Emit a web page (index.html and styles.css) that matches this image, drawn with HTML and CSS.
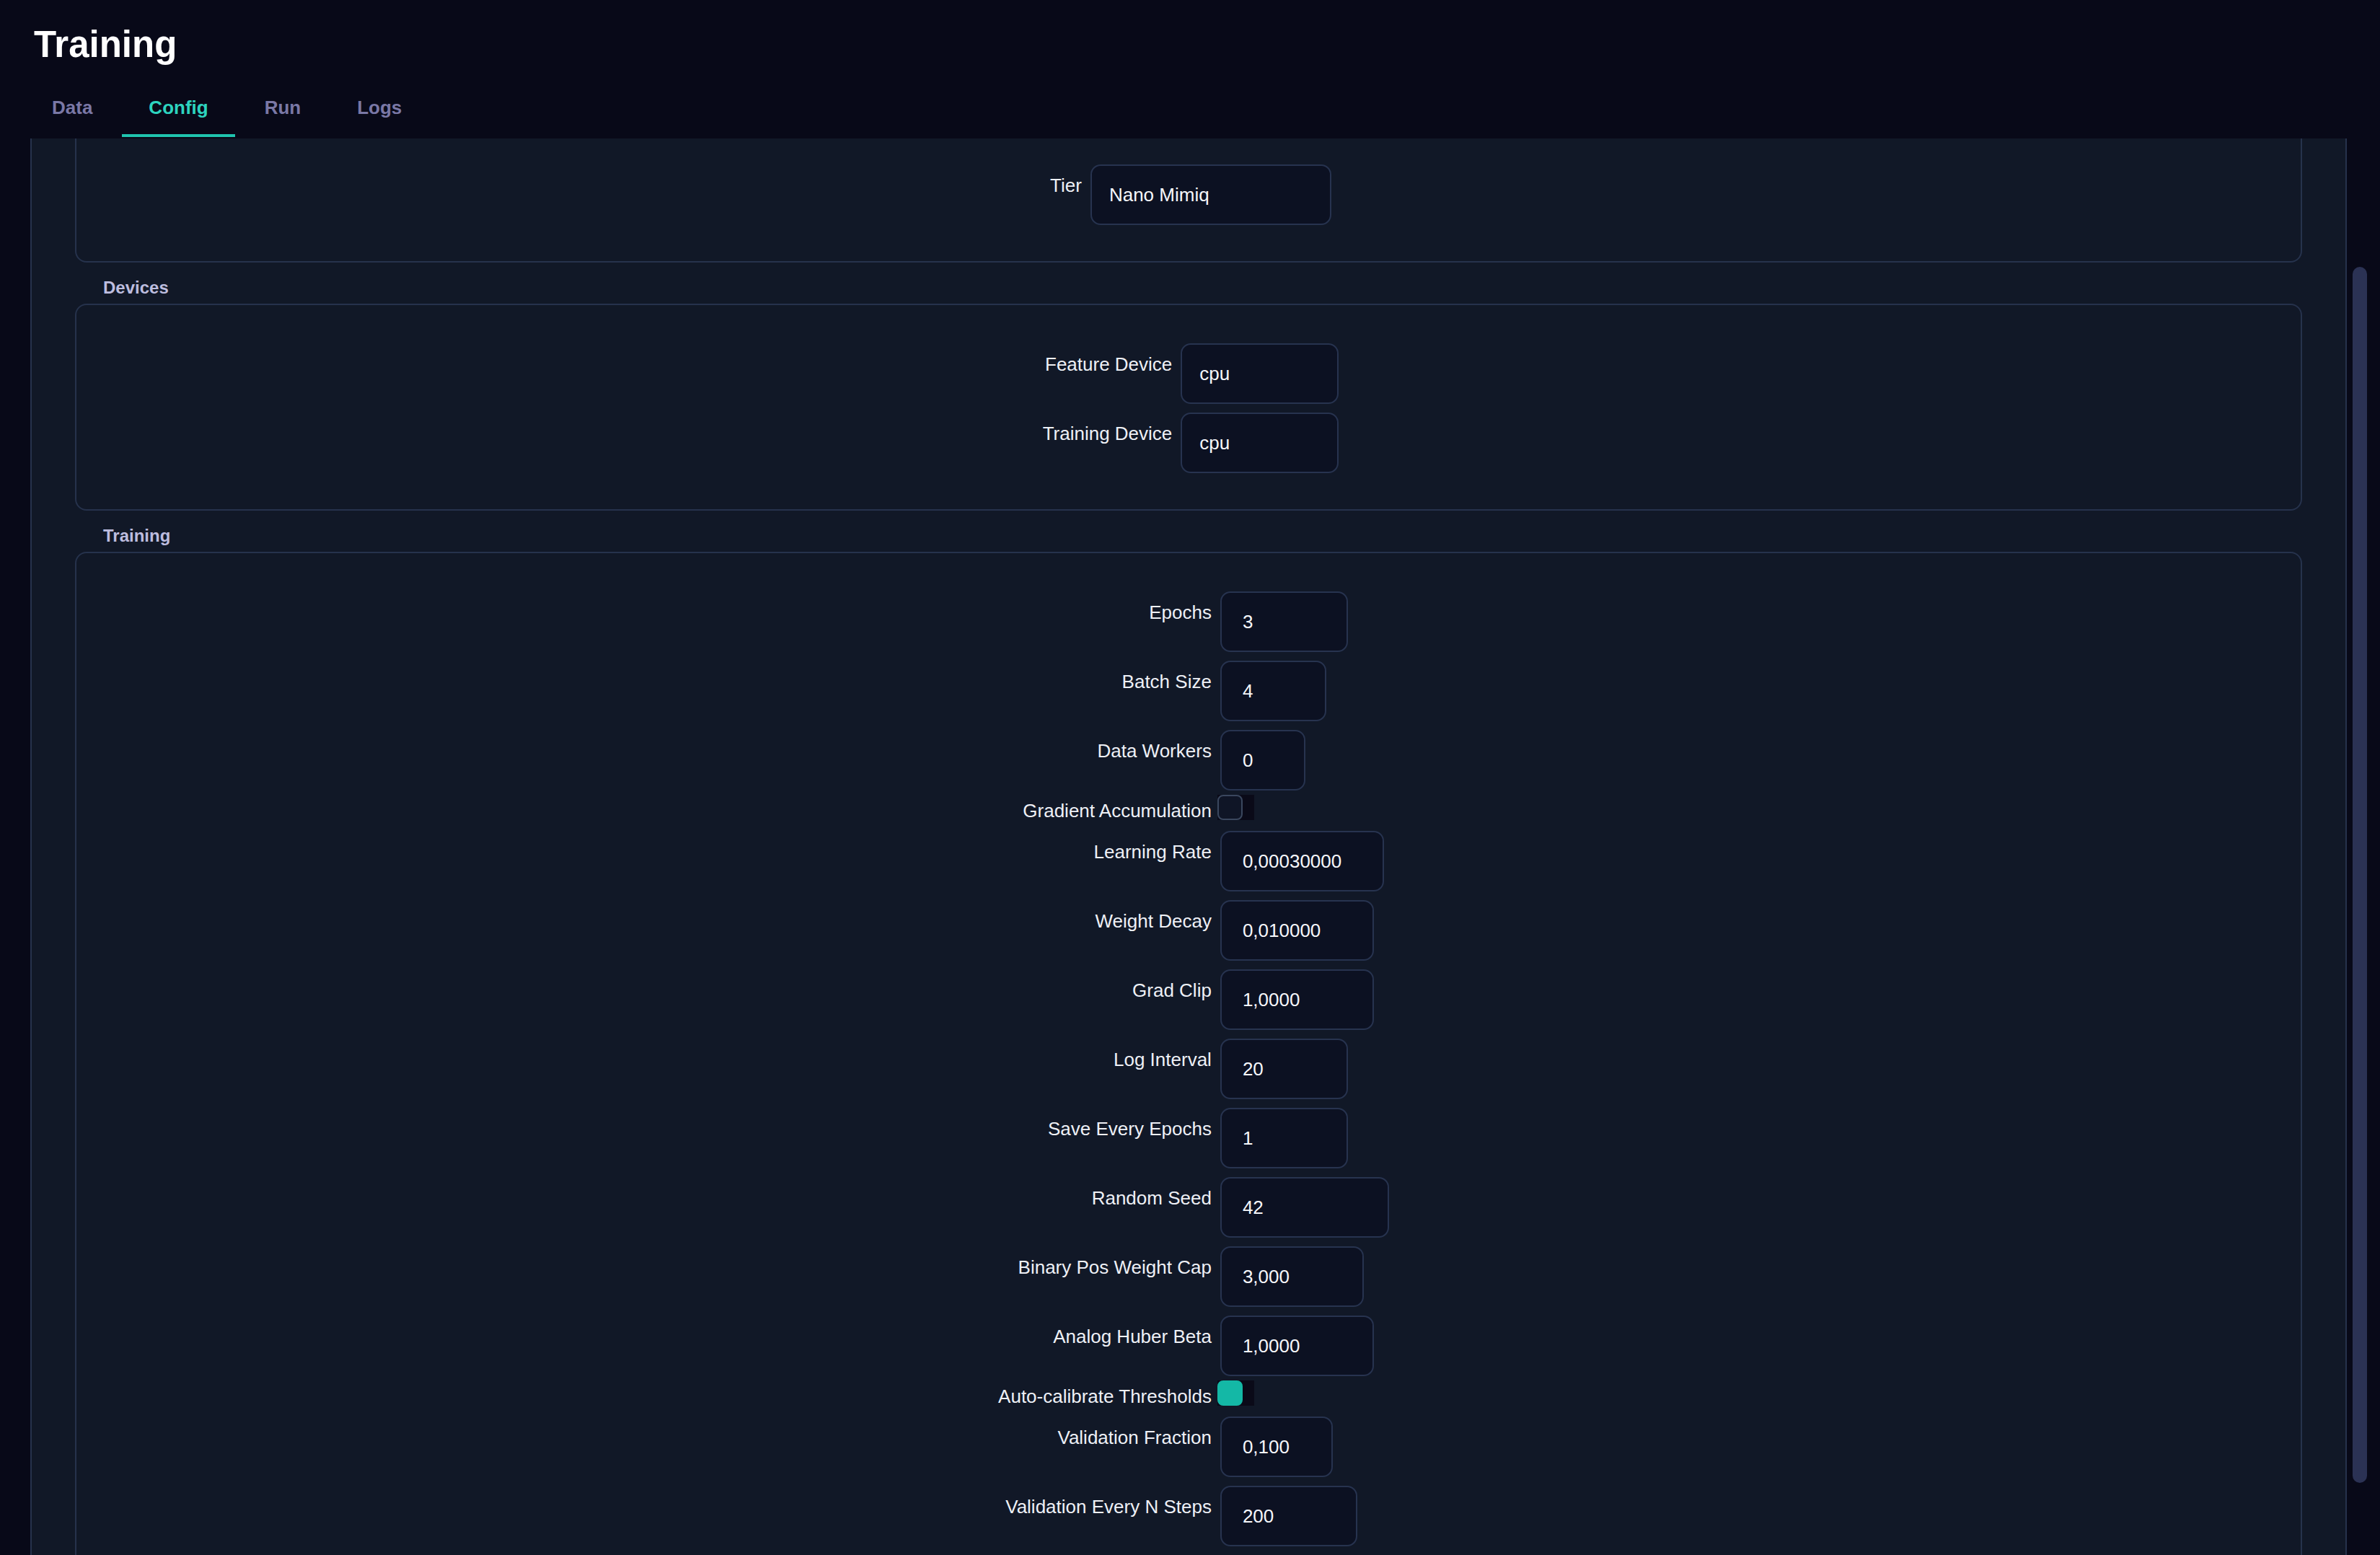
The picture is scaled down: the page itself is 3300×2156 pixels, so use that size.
FILE: index.html
```html
<!DOCTYPE html>
<html lang="en">
<head>
    <meta charset="UTF-8">
    <meta name="viewport" content="width=device-width, initial-scale=1.0">
    <title>Training</title>
    <link rel="stylesheet" href="styles.css">
</head>
<body>
    <div id="app">
        <div class="header">
            <h1>Training</h1>
            <div class="tabs">
                <button class="tab">Data</button>
                <button class="tab active">Config</button>
                <button class="tab">Run</button>
                <button class="tab">Logs</button>
            </div>
        </div>
        <div class="main">
            <div id="scroller" class="scroller">
                <div class="panel">
                    <div class="group">
                        <div class="form-grid">
                            <label>Tier</label>
                            <input type="text" class="w-334" value="Nano Mimiq">
                        </div>
                    </div>

                    <div class="group-title">Devices</div>
                    <div class="group">
                        <div class="form-grid">
                            <label>Feature Device</label>
                            <input type="text" class="w-219" value="cpu">
                            <label>Training Device</label>
                            <input type="text" class="w-219" value="cpu">
                        </div>
                    </div>

                    <div class="group-title">Training</div>
                    <div class="group group-wide">
                        <div class="form-grid">
                            <label>Epochs</label>
                            <input type="text" class="num w-177" value="3">
                            <label>Batch Size</label>
                            <input type="text" class="num w-147" value="4">
                            <label>Data Workers</label>
                            <input type="text" class="num w-118" value="0">
                            <label class="check-label">Gradient Accumulation</label>
                            <span class="toggle"><input type="checkbox"></span>
                            <label>Learning Rate</label>
                            <input type="text" class="num w-227" value="0,00030000">
                            <label>Weight Decay</label>
                            <input type="text" class="num w-213" value="0,010000">
                            <label>Grad Clip</label>
                            <input type="text" class="num w-213" value="1,0000">
                            <label>Log Interval</label>
                            <input type="text" class="num w-177" value="20">
                            <label>Save Every Epochs</label>
                            <input type="text" class="num w-177" value="1">
                            <label>Random Seed</label>
                            <input type="text" class="num w-234" value="42">
                            <label>Binary Pos Weight Cap</label>
                            <input type="text" class="num w-199" value="3,000">
                            <label>Analog Huber Beta</label>
                            <input type="text" class="num w-213" value="1,0000">
                            <label class="check-label">Auto-calibrate Thresholds</label>
                            <span class="toggle"><input type="checkbox" checked></span>
                            <label>Validation Fraction</label>
                            <input type="text" class="num w-156" value="0,100">
                            <label>Validation Every N Steps</label>
                            <input type="text" class="num w-190" value="200">
                        </div>
                    </div>
                </div>
            </div>
            <div class="rail">
                <div class="thumb"></div>
            </div>
        </div>
    </div>
    <script>
        // keep the config panel scrolled a little past the tier box
        document.getElementById('scroller').scrollTop = 45;
    </script>
</body>
</html>
```

FILE: styles.css
```css
* {
    box-sizing: border-box;
}
html, body {
    margin: 0;
    height: 100%;
}
body {
    background-color: #080918;
    color: #eef0f6;
    font-family: "Liberation Sans", Arial, sans-serif;
    overflow: hidden;
}
#app {
    display: flex;
    flex-direction: column;
    height: 100vh;
}
.header {
    flex: 0 0 auto;
    padding: 29px 0 2px;
}
.header h1 {
    margin: 0;
    padding-left: 47px;
    font-size: 51px;
    line-height: 66px;
    font-weight: 700;
    color: #fff;
}
.tabs {
    display: flex;
    gap: 4px;
    margin-top: 15px;
    padding-left: 35px;
}
.tab {
    margin: 0;
    padding: 24px 37px 22px;
    background: none;
    border: none;
    border-bottom: 4px solid transparent;
    font-family: inherit;
    font-size: 26px;
    line-height: 30px;
    font-weight: 700;
    color: #7a78a6;
    cursor: pointer;
}
.tab.active {
    color: #2dd4bf;
    border-bottom-color: #1fc4ae;
}
.main {
    flex: 1;
    min-height: 0;
    display: flex;
}
.scroller {
    flex: 1;
    overflow: hidden;
    padding-left: 42px;
}
.panel {
    background-color: #111827;
    border: 2px solid #26324c;
    border-bottom: none;
    border-radius: 16px 16px 0 0;
    padding: 24px 60px 0;
}
.group-title {
    margin: 21px 0 8px;
    padding-left: 39px;
    font-size: 24px;
    line-height: 28px;
    font-weight: 700;
    color: #bdbddf;
}
.group {
    border: 2px solid #26324c;
    border-radius: 16px;
    padding: 53px 60px 50px 66px;
}
.group-wide {
    padding-left: 74px;
}
.form-grid {
    display: grid;
    grid-template-columns: auto auto;
    justify-content: center;
    align-items: start;
    column-gap: 12px;
    row-gap: 12px;
}
.form-grid label {
    padding-top: 14px;
    font-size: 26px;
    line-height: 30px;
    text-align: right;
    color: #eef0f6;
    white-space: nowrap;
}
.form-grid label.check-label {
    padding-top: 0;
    line-height: 32px;
}
.form-grid input[type="text"] {
    justify-self: start;
    height: 84px;
    padding: 0 24px;
    border: 2px solid #27334f;
    border-radius: 14px;
    background-color: #0c1122;
    color: #f6f7fb;
    font-family: inherit;
    font-size: 26px;
    outline: none;
}
.form-grid input.num {
    padding-left: 29px;
}
.toggle {
    justify-self: start;
    display: flex;
    width: 51px;
    height: 35px;
    margin: -6px 0 0 -4px;
    background-color: #0a0a18;
}
.toggle input {
    appearance: none;
    -webkit-appearance: none;
    width: 35px;
    height: 35px;
    margin: 0;
    border: 2px solid #3a475e;
    border-radius: 8px;
    background-color: #0f1526;
}
.toggle input:checked {
    border-color: #14b8a6;
    background-color: #14b8a6;
}
.w-118 { width: 118px; }
.w-147 { width: 147px; }
.w-156 { width: 156px; }
.w-177 { width: 177px; }
.w-190 { width: 190px; }
.w-199 { width: 199px; }
.w-213 { width: 213px; }
.w-219 { width: 219px; }
.w-227 { width: 227px; }
.w-234 { width: 234px; }
.w-334 { width: 334px; }
.rail {
    flex: 0 0 46px;
    padding: 178px 18px 0 8px;
}
.thumb {
    height: 1686px;
    border-radius: 10px;
    background-color: #2b3254;
}
```
